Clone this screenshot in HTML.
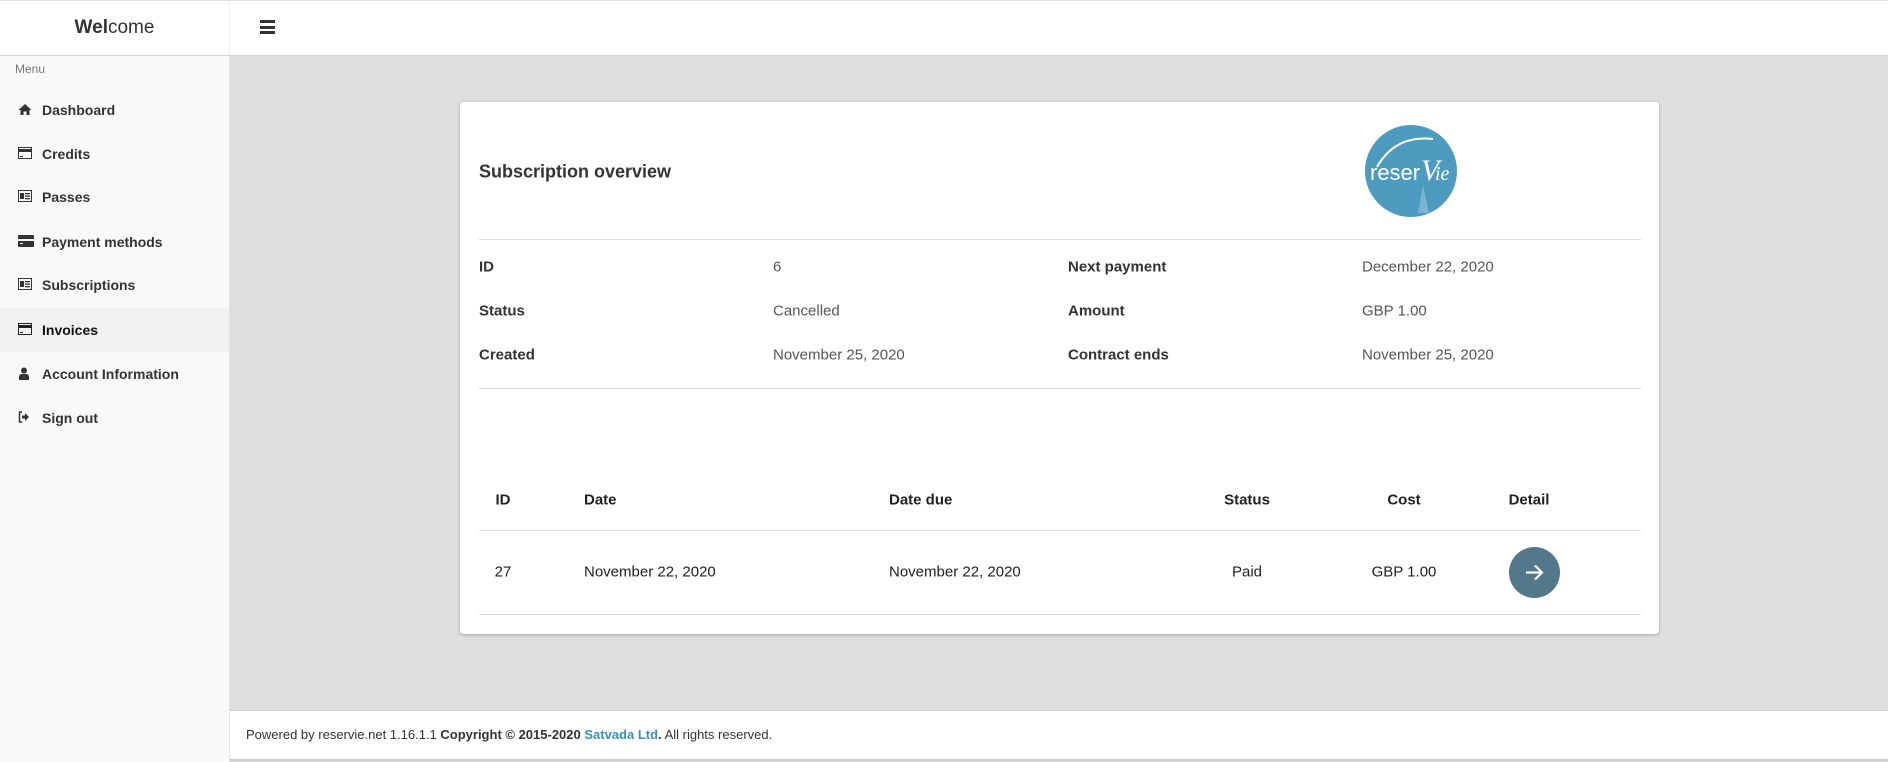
<!DOCTYPE html>
<html><head><meta charset="utf-8"><style>
*{box-sizing:border-box;margin:0;padding:0}
body{width:1888px;height:762px;overflow:hidden;font-family:"Liberation Sans",sans-serif;background:#dedede;position:relative;color:#333}
.abs{position:absolute}
#top{left:0;top:0;width:1888px;height:56px;background:#fff;border-top:1px solid #ddd;border-bottom:1px solid #d6d6d6}
#side{left:0;top:56px;width:230px;height:706px;background:#f8f9fa;border-right:1px solid #e4e4e4}
#logoarea{left:0;top:1px;width:230px;height:54px;border-right:1px solid #eee;text-align:center;font-size:19px;line-height:54px;color:#333}
.mi{position:absolute;left:0;width:229px;height:44px;line-height:44px;font-size:14px;font-weight:bold;color:#333;padding-left:42px}
.mi svg{position:absolute;left:18px;top:15px}
#card{left:460px;top:102px;width:1199px;height:532px;background:#fff;border-radius:4px;box-shadow:0 1px 3px rgba(0,0,0,.25)}
.hr{position:absolute;height:1px;background:#dcdcdc}
.t{position:absolute;font-size:15px;white-space:nowrap;transform:translateY(-50%)}
.b{font-weight:bold;color:#333}
.v{color:#555}
.th{position:absolute;font-size:15px;font-weight:bold;color:#222;transform:translate(-50%,-50%)}
.td{position:absolute;font-size:15px;color:#222;transform:translate(-50%,-50%);white-space:nowrap}
#foot{left:230px;top:710px;width:1658px;height:51px;background:#fff;border-top:1px solid #d0d0d0;border-bottom:2px solid #ccc;font-size:13px;line-height:48px;padding-left:16px;color:#333}
</style></head><body>
<div id="top" class="abs"></div>
<div id="logoarea" class="abs"><b>Wel</b>come</div>
<div class="abs" style="left:260px;top:20px;width:15px;height:14px">
<div style="height:3px;background:#333;margin-bottom:2.5px"></div><div style="height:3px;background:#333;margin-bottom:2.5px"></div><div style="height:3px;background:#333"></div></div>
<div id="side" class="abs">
<div class="abs" style="left:15px;top:6px;font-size:12px;color:#777">Menu</div>
<div class="mi" style="top:32px"><svg width="14" height="13" viewBox="0 0 14 13"><path d="M7 1L0.5 7H2.5V12H5.5V8.5H8.5V12H11.5V7H13.5Z" fill="#333"/></svg>Dashboard</div>
<div class="mi" style="top:76px"><svg width="14" height="12" viewBox="0 0 14 12"><rect x=".5" y=".5" width="13" height="11" fill="none" stroke="#333"/><rect x="0" y="2" width="14" height="3" fill="#333"/><rect x="2" y="9" width="3" height="1" fill="#333"/></svg>Credits</div>
<div class="mi" style="top:119px"><svg width="14" height="12" viewBox="0 0 14 12"><rect x=".5" y=".5" width="13" height="11" fill="none" stroke="#333"/><rect x="2" y="3" width="4" height="6" fill="#333"/><rect x="7" y="3" width="5" height="1.3" fill="#333"/><rect x="7" y="5.5" width="5" height="1.3" fill="#333"/><rect x="7" y="8" width="5" height="1.3" fill="#333"/></svg>Passes</div>
<div class="mi" style="top:164px"><svg width="16" height="12" viewBox="0 0 16 12"><rect x="0" y="0" width="16" height="12" rx="1" fill="#333"/><rect x="0" y="4" width="16" height="2" fill="#f8f9fa"/><rect x="2" y="8" width="3" height="1" fill="#f8f9fa"/></svg>Payment methods</div>
<div class="mi" style="top:207px"><svg width="14" height="12" viewBox="0 0 14 12"><rect x=".5" y=".5" width="13" height="11" fill="none" stroke="#333"/><rect x="2" y="3" width="4" height="6" fill="#333"/><rect x="7" y="3" width="5" height="1.3" fill="#333"/><rect x="7" y="5.5" width="5" height="1.3" fill="#333"/><rect x="7" y="8" width="5" height="1.3" fill="#333"/></svg>Subscriptions</div>
<div class="mi" style="top:252px;background:#f1f1f1;color:#111"><svg width="14" height="12" viewBox="0 0 14 12"><rect x=".5" y=".5" width="13" height="11" fill="none" stroke="#222"/><rect x="0" y="2" width="14" height="3" fill="#222"/><rect x="2" y="9" width="3" height="1" fill="#222"/></svg>Invoices</div>
<div class="mi" style="top:296px"><svg width="12" height="13" viewBox="0 0 12 13"><circle cx="6" cy="3.5" r="3" fill="#333"/><path d="M1 13V10Q1 7 4 7H8Q11 7 11 10V13Z" fill="#333"/></svg>Account Information</div>
<div class="mi" style="top:340px"><svg width="12" height="12" viewBox="0 0 12 12"><path d="M4 1H1.5V11H4" stroke="#333" stroke-width="1.5" fill="none"/><path d="M4 4.5H7V2L11 6L7 10V7.5H4Z" fill="#333"/></svg>Sign out</div>
</div>
<div id="card" class="abs">
<div class="abs" style="left:19px;top:70px;font-size:18px;font-weight:bold;color:#333;transform:translateY(-50%)">Subscription overview</div>
<svg class="abs" style="left:905px;top:23px" width="92" height="92" viewBox="0 0 92 92"><circle cx="46" cy="46" r="46" fill="#4d9bbf"/><path d="M12 42Q30 10 68 14" stroke="#fff" stroke-width="2" fill="none"/><path d="M53 88L58 60L64 88Z" fill="#8cc0d8" opacity=".7"/><text x="5" y="55" font-family="Liberation Sans,sans-serif" font-size="22" fill="#fff">reser</text><text x="56" y="55" font-family="Liberation Serif,serif" font-style="italic" font-size="30" fill="#fff">V</text><text x="70" y="55" font-family="Liberation Serif,serif" font-style="italic" font-size="20" fill="#fff">ie</text></svg>
<div class="hr" style="left:19px;width:1162px;top:137px"></div>
<div class="t b" style="left:19px;top:165px">ID</div><div class="t v" style="left:313px;top:165px">6</div>
<div class="t b" style="left:608px;top:165px">Next payment</div><div class="t v" style="left:902px;top:165px">December 22, 2020</div>
<div class="t b" style="left:19px;top:209px">Status</div><div class="t v" style="left:313px;top:209px">Cancelled</div>
<div class="t b" style="left:608px;top:209px">Amount</div><div class="t v" style="left:902px;top:209px">GBP 1.00</div>
<div class="t b" style="left:19px;top:253px">Created</div><div class="t v" style="left:313px;top:253px">November 25, 2020</div>
<div class="t b" style="left:608px;top:253px">Contract ends</div><div class="t v" style="left:902px;top:253px">November 25, 2020</div>
<div class="hr" style="left:19px;width:1162px;top:286px"></div>
<div class="th" style="left:43px;top:398px">ID</div>
<div class="th" style="left:124px;top:398px;transform:translateY(-50%)">Date</div>
<div class="th" style="left:429px;top:398px;transform:translateY(-50%)">Date due</div>
<div class="th" style="left:787px;top:398px">Status</div>
<div class="th" style="left:944px;top:398px">Cost</div>
<div class="th" style="left:1069px;top:398px">Detail</div>
<div class="hr" style="left:19px;width:1162px;top:428px"></div>
<div class="td" style="left:43px;top:470px">27</div>
<div class="td" style="left:124px;top:470px;transform:translateY(-50%)">November 22, 2020</div>
<div class="td" style="left:429px;top:470px;transform:translateY(-50%)">November 22, 2020</div>
<div class="td" style="left:787px;top:470px">Paid</div>
<div class="td" style="left:944px;top:470px">GBP 1.00</div>
<svg class="abs" style="left:1049px;top:445px" width="51" height="51" viewBox="0 0 51 51"><circle cx="25.5" cy="25.5" r="25.5" fill="#53788c"/><path d="M17 25.5H33M26 18.5L33 25.5L26 32.5" stroke="#fff" stroke-width="2.2" fill="none"/></svg>
<div class="hr" style="left:19px;width:1162px;top:512px"></div>
</div>
<div id="foot" class="abs">Powered by reservie.net 1.16.1.1 <b>Copyright © 2015-2020 <span style="color:#3c8dbc">Satvada Ltd</span>.</b> All rights reserved.</div>
</body></html>
